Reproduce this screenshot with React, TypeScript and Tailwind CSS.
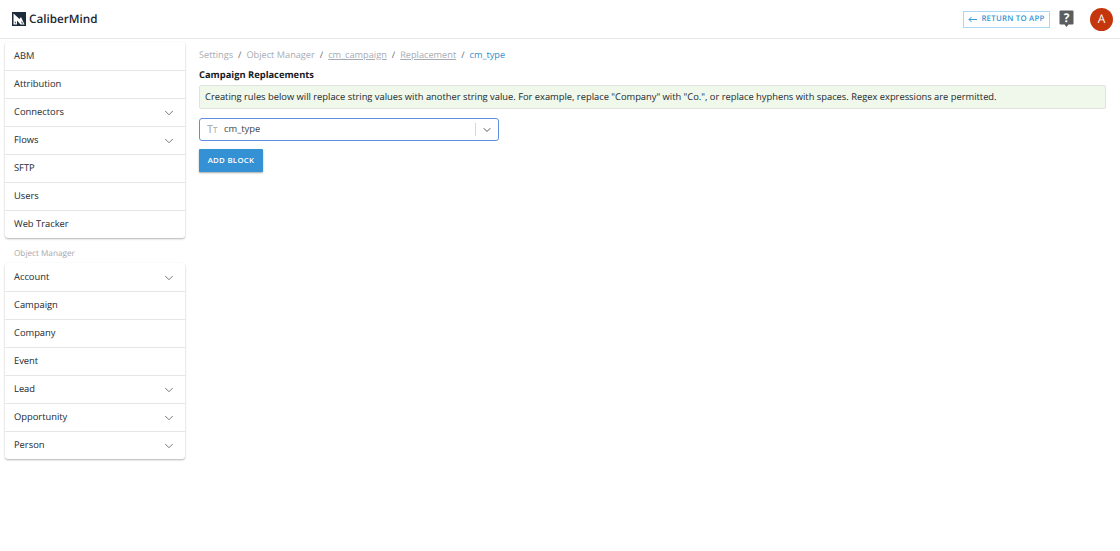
import { ChevronDown } from "lucide-react";

type NavItem = { label: string; expandable?: boolean };

const settingsItems: NavItem[] = [
  { label: "ABM" },
  { label: "Attribution" },
  { label: "Connectors", expandable: true },
  { label: "Flows", expandable: true },
  { label: "SFTP" },
  { label: "Users" },
  { label: "Web Tracker" },
];

const objectItems: NavItem[] = [
  { label: "Account", expandable: true },
  { label: "Campaign" },
  { label: "Company" },
  { label: "Event" },
  { label: "Lead", expandable: true },
  { label: "Opportunity", expandable: true },
  { label: "Person", expandable: true },
];

function NavCard({ items }: { items: NavItem[] }) {
  return (
    <div className="rounded-[3px] bg-white shadow-[0_1px_2px_rgba(0,0,0,0.3)]">
      {items.map((item, index) => (
        <div
          key={item.label}
          className={`flex h-[28px] items-center justify-between pl-[9px] pr-[9px] text-[9.35px] text-[#22272e] ${
            index > 0 ? "border-t border-[#e6e6e6]" : "pt-[1px]"
          }`}
        >
          <span>{item.label}</span>
          {item.expandable ? <ChevronDown className="h-[14px] w-[14px] text-[#6b6f75]" strokeWidth={1.6} /> : null}
        </div>
      ))}
    </div>
  );
}

function Logo() {
  return (
    <svg width="14" height="14" viewBox="0 0 14 14" className="shrink-0">
      <rect width="14" height="14" fill="#1d2b3a" />
      <path d="M1.5 1.5 L7.5 7 L9 5 L12.5 12.5 L8.5 12.5 L5 8.5 L5 12.5 L1.5 12.5 Z" fill="#fff" />
      <path d="M2.8 9 L2.8 11.3 L4.2 11.3 Z" fill="#1d2b3a" />
      <path d="M9 9 L9.8 11.5 L11.4 11.5 Z" fill="#1d2b3a" />
    </svg>
  );
}

function HelpIcon() {
  return (
    <svg width="15" height="18" viewBox="0 0 15 18">
      <path d="M1.5 0.5 H13.5 A1 1 0 0 1 14.5 1.5 V13.5 A1 1 0 0 1 13.5 14.5 H9.5 L7.5 17 L5.5 14.5 H1.5 A1 1 0 0 1 0.5 13.5 V1.5 A1 1 0 0 1 1.5 0.5 Z" fill="#5b5d60" />
      <text x="7.5" y="11.8" textAnchor="middle" fontSize="12" fontWeight="700" fill="#fff" fontFamily="'Open Sans', sans-serif">?</text>
    </svg>
  );
}

export default function App() {
  return (
    <div className="h-[551px] w-[1120px] overflow-hidden bg-white font-['Open_Sans',sans-serif] [text-rendering:geometricPrecision]">
      <header className="flex h-[39px] items-center justify-between border-b border-[#e8e8e8] pl-[12px] pr-[7px]">
        <div className="flex items-center gap-[3px]">
          <Logo />
          <span className="pt-[1px] text-[11.7px] font-semibold text-[#1d2733]">CaliberMind</span>
        </div>
        <div className="flex items-center">
          <div className="flex h-[17px] w-[87px] items-center justify-center gap-[4px] border border-[#a9d8f2] text-[#3496d6]">
            <svg width="9" height="7" viewBox="0 0 9 7" fill="none" stroke="currentColor" strokeWidth="1">
              <path d="M9 3.5 H1 M3.5 1 L1 3.5 L3.5 6" />
            </svg>
            <span className="pt-[2px] text-[7.8px] font-semibold tracking-[0.25px]">RETURN TO APP</span>
          </div>
          <div className="ml-[9px] flex w-[15px] items-center">
            <HelpIcon />
          </div>
          <div className="ml-[16px] flex h-[23px] w-[23px] items-center justify-center rounded-full bg-[#c5360c] text-[12px] text-white">
            A
          </div>
        </div>
      </header>

      <div className="flex">
        <aside className="ml-[5px] mt-[3px] w-[180px] shrink-0">
          <NavCard items={settingsItems} />
          <div className="flex h-[25px] items-end pb-[3px] pl-[9px] text-[8.2px] text-[#a5a8ae]">Object Manager</div>
          <NavCard items={objectItems} />
        </aside>

        <main className="ml-[14px] w-[907px] pt-[8px]">
          <nav className="flex h-[15px] items-center gap-[5px] text-[9.2px] text-[#a8abb2]">
            <span>Settings</span>
            <span className="text-[#666a70]">/</span>
            <span>Object Manager</span>
            <span className="text-[#666a70]">/</span>
            <span className="underline">cm_campaign</span>
            <span className="text-[#666a70]">/</span>
            <span className="underline">Replacement</span>
            <span className="text-[#666a70]">/</span>
            <span className="text-[#2f8fd0]">cm_type</span>
          </nav>
          <h1 className="mt-[5px] text-[9.35px] leading-[15px] font-bold text-[#16191d]">Campaign Replacements</h1>
          <div className="mt-[3px] flex h-[24px] items-center rounded-[2px] border border-[#e0e4de] bg-[#eff8ea] pl-[5px] text-[9.33px] text-[#22272e]">
            Creating rules below will replace string values with another string value. For example, replace "Company" with "Co.", or replace hyphens with spaces. Regex expressions are permitted.
          </div>
          <div className="mt-[9px] flex h-[23px] w-[300px] items-center rounded-[3px] border border-[#5d8fe0] bg-white pl-[7px]">
            <span className="flex w-[17px] items-baseline text-[11px] leading-none text-[#9fa2a8]">T<span className="text-[8px]">T</span></span>
            <span className="text-[9.35px] text-[#3a3f45]">cm_type</span>
            <div className="ml-auto flex items-center">
              <div className="h-[13px] w-px bg-[#d5d7da]" />
              <ChevronDown className="mx-[5px] h-[12px] w-[12px] text-[#55595e]" strokeWidth={2} />
            </div>
          </div>
          <button className="mt-[8px] flex h-[23px] w-[64px] items-center justify-center rounded-[1px] bg-[#3491d4] text-[7.8px] font-semibold tracking-[0.3px] text-white shadow-[0_1px_2px_rgba(0,0,0,0.35)]">
            ADD BLOCK
          </button>
        </main>
      </div>
    </div>
  );
}
